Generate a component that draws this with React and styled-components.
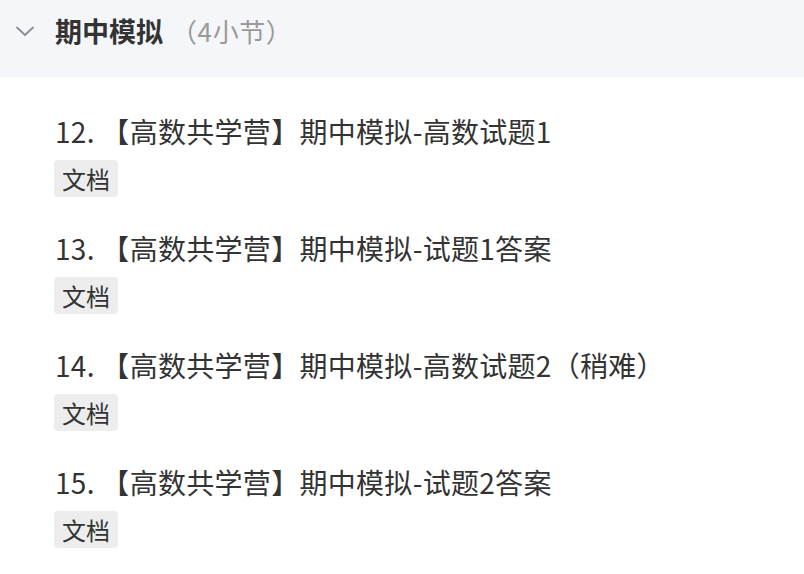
import React from 'react';
import styled, { createGlobalStyle } from 'styled-components';

const GlobalStyle = createGlobalStyle`
  html, body {
    margin: 0;
    padding: 0;
    background: #fff;
    font-family: "Noto Sans CJK SC", "Noto Sans", sans-serif;
    color: #333;
  }
`;

const Page = styled.div`
  width: 804px;
  height: 574px;
  overflow: hidden;
  background: #fff;
`;

const Header = styled.div`
  display: flex;
  align-items: center;
  height: 77px;
  padding: 0 0 16px 15px;
  box-sizing: border-box;
  background: #f5f6f9;
`;

const Chevron = styled.svg`
  width: 20px;
  height: 12px;
  margin-right: 20px;
  flex-shrink: 0;
`;

const Title = styled.span`
  font-size: 27px;
  line-height: 36px;
  font-weight: 700;
  color: #333;
`;

const Count = styled.span`
  font-size: 26px;
  line-height: 36px;
  color: #9a9a9a;
  margin-left: 8px;
  letter-spacing: 0.6px;
`;

const List = styled.div`
  display: flex;
  flex-direction: column;
  padding: 34px 0 0 55px;
  gap: 31px;
`;

const Item = styled.div`
  display: flex;
  flex-direction: column;
  align-items: flex-start;
  gap: 9px;
`;

const ItemTitle = styled.div`
  font-size: 28px;
  line-height: 40px;
  color: #333;
  letter-spacing: 0.3px;
`;

const Tag = styled.span`
  display: inline-block;
  padding: 0 8px;
  height: 37px;
  line-height: 37px;
  font-size: 24px;
  border-radius: 4px;
  background: #ededed;
  color: #333;
  margin-left: -1px;
`;

const items = [
  '12. 【高数共学营】期中模拟-高数试题1',
  '13. 【高数共学营】期中模拟-试题1答案',
  '14. 【高数共学营】期中模拟-高数试题2（稍难）',
  '15. 【高数共学营】期中模拟-试题2答案',
];

export default function App() {
  return (
    <Page>
      <GlobalStyle />
      <Header>
        <Chevron viewBox="0 0 20 12" fill="none" stroke="#8a8d93" strokeWidth="1.8" strokeLinecap="round" strokeLinejoin="round">
          <path d="M2 2.5l8 7.5 8-7.5" />
        </Chevron>
        <Title>期中模拟</Title>
        <Count>（4小节）</Count>
      </Header>
      <List>
        {items.map((t) => (
          <Item key={t}>
            <ItemTitle>{t}</ItemTitle>
            <Tag>文档</Tag>
          </Item>
        ))}
      </List>
    </Page>
  );
}
